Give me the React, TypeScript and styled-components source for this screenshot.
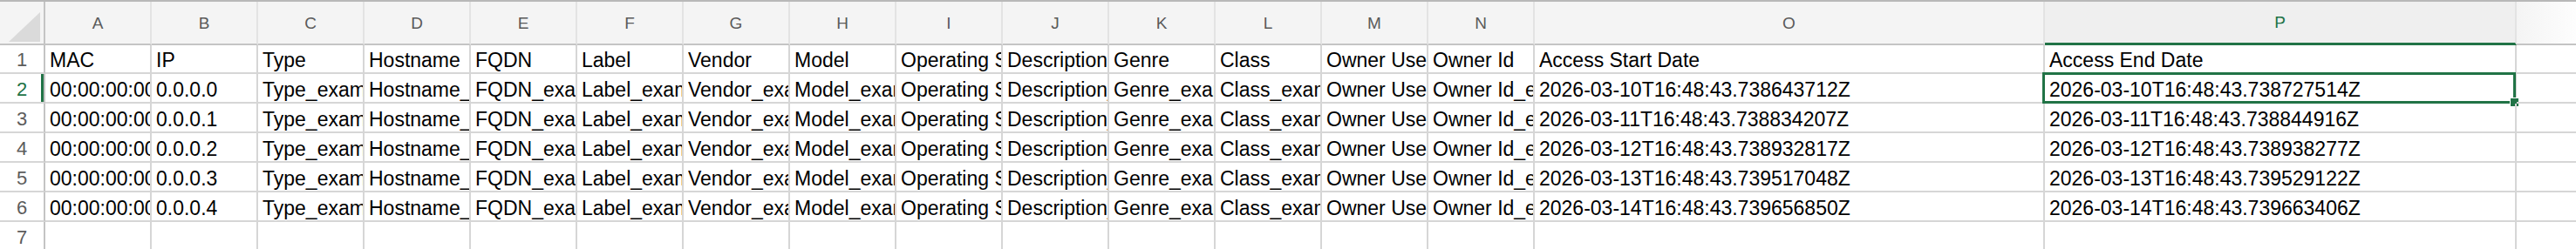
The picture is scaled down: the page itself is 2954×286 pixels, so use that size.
import React from "react";
import styled, { createGlobalStyle, css } from "styled-components";

const GREEN = "#217346";
const GRID = "#d6d6d6";
const HEAD_LINE = "#c4c4c4";

const GlobalStyle = createGlobalStyle`
  html, body { margin: 0; padding: 0; background: #ffffff; overflow: hidden; }
  body { font-family: "Liberation Sans", Arial, sans-serif; }
`;

const Sheet = styled.div`
  display: grid;
  width: 100vw;
  grid-template-columns: 52px repeat(14, 122px) 585px 541px 1fr;
  grid-template-rows: 50px 33px repeat(6, 34px);
  border-top: 2px solid #b8b8b8;
  box-sizing: border-box;
  background: #ffffff;
`;

const Corner = styled.div`
  box-sizing: border-box;
  background: #f4f4f4;
  border-right: 2px solid ${HEAD_LINE};
  border-bottom: 2px solid ${HEAD_LINE};
  display: flex;
  align-items: flex-end;
  justify-content: flex-end;
  padding: 0 4px 2px 0;
`;

const Triangle = styled.div`
  width: 36px;
  height: 34px;
  background: #dadada;
  clip-path: polygon(100% 0, 100% 100%, 0 100%);
`;

const ColHeader = styled.div<{ $selected?: boolean; $fade?: boolean }>`
  box-sizing: border-box;
  display: flex;
  align-items: center;
  justify-content: center;
  background: #f4f4f4;
  border-right: 2px solid #e3e3e3;
  border-bottom: 2px solid ${HEAD_LINE};
  color: #5a5a5a;
  font-size: 19px;
  padding-top: 1px;
  ${(p) =>
    p.$selected &&
    css`
      background: #efefef;
      color: ${GREEN};
      border-bottom: 3px solid ${GREEN};
    `}
  ${(p) =>
    p.$fade &&
    css`
      background: linear-gradient(to right, #f4f4f4, #fdfdfd);
      border-right: none;
    `}
`;

const RowHeader = styled.div<{ $selected?: boolean }>`
  box-sizing: border-box;
  display: flex;
  align-items: flex-end;
  justify-content: center;
  background: #ffffff;
  border-right: 2px solid ${HEAD_LINE};
  border-bottom: 2px solid ${GRID};
  color: #5c5c5c;
  font-size: 22px;
  line-height: 28px;
  ${(p) =>
    p.$selected &&
    css`
      color: ${GREEN};
      box-shadow: inset -3px 0 0 ${GREEN};
    `}
`;

const Cell = styled.div<{ $last?: boolean }>`
  position: relative;
  box-sizing: border-box;
  display: flex;
  align-items: flex-end;
  min-width: 0;
  padding-left: 5px;
  border-right: ${(p) => (p.$last ? "none" : `2px solid ${GRID}`)};
  border-bottom: 2px solid ${GRID};
  color: #000000;
  font-size: 23px;
  line-height: 28px;
  white-space: nowrap;
  overflow: hidden;
`;

const CellText = styled.span`
  display: block;
  max-width: 100%;
  overflow: hidden;
  text-overflow: clip;
`;

const Selection = styled.div`
  position: absolute;
  top: -2px;
  left: -3px;
  right: -1px;
  bottom: -2px;
  border: 3px solid ${GREEN};
  pointer-events: none;
`;

const FillHandle = styled.div`
  position: absolute;
  right: -4px;
  bottom: -5px;
  width: 9px;
  height: 9px;
  background: ${GREEN};
  outline: 1px solid #ffffff;
`;

const SelectedCellWrap = styled(Cell)`
  overflow: visible;
`;

const letters = "ABCDEFGHIJKLMNOP".split("");

const headers = [
  "MAC",
  "IP",
  "Type",
  "Hostname",
  "FQDN",
  "Label",
  "Vendor",
  "Model",
  "Operating System",
  "Description",
  "Genre",
  "Class",
  "Owner User",
  "Owner Id",
  "Access Start Date",
  "Access End Date",
];

const starts = [
  "2026-03-10T16:48:43.738643712Z",
  "2026-03-11T16:48:43.738834207Z",
  "2026-03-12T16:48:43.738932817Z",
  "2026-03-13T16:48:43.739517048Z",
  "2026-03-14T16:48:43.739656850Z",
];

const ends = [
  "2026-03-10T16:48:43.738727514Z",
  "2026-03-11T16:48:43.738844916Z",
  "2026-03-12T16:48:43.738938277Z",
  "2026-03-13T16:48:43.739529122Z",
  "2026-03-14T16:48:43.739663406Z",
];

const dataRows: string[][] = starts.map((s, i) => [
  `00:00:00:00:00:0${i}`,
  `0.0.0.${i}`,
  "Type_example",
  "Hostname_example",
  "FQDN_example",
  "Label_example",
  "Vendor_example",
  "Model_example",
  "Operating System_example",
  "Description_example",
  "Genre_example",
  "Class_example",
  "Owner User_example",
  "Owner Id_example",
  s,
  ends[i],
]);

const allRows: string[][] = [headers, ...dataRows, Array(16).fill("")];

export default function App() {
  return (
    <>
      <GlobalStyle />
      <Sheet>
        <Corner>
          <Triangle />
        </Corner>
        {letters.map((l) => (
          <ColHeader key={l} $selected={l === "P"}>
            {l}
          </ColHeader>
        ))}
        <ColHeader $fade />
        {allRows.map((row, r) => (
          <React.Fragment key={r}>
            <RowHeader $selected={r === 1}>{r + 1}</RowHeader>
            {row.map((v, c) =>
              r === 1 && c === 15 ? (
                <SelectedCellWrap key={c}>
                  <CellText>{v}</CellText>
                  <Selection />
                  <FillHandle />
                </SelectedCellWrap>
              ) : (
                <Cell key={c}>{v ? <CellText>{v}</CellText> : null}</Cell>
              )
            )}
            <Cell $last />
          </React.Fragment>
        ))}
      </Sheet>
    </>
  );
}
